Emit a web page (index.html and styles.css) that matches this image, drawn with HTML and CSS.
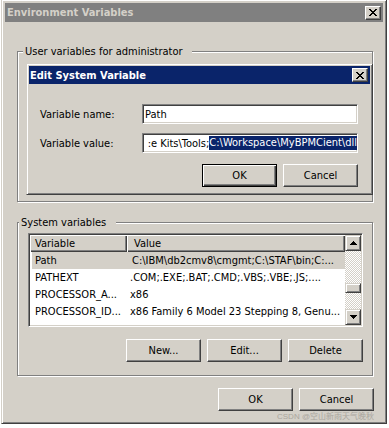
FILE: index.html
```html
<!DOCTYPE html>
<html lang="en">
<head>
<meta charset="UTF-8">
<meta name="viewport" content="width=device-width, initial-scale=1.0">
<title>Environment Variables</title>
<link rel="stylesheet" href="styles.css">
</head>
<body>
<div class="window">
  <div class="titlebar inactive">
    <span class="title-text">Environment Variables</span>
    <span class="close-btn">
      <svg width="8" height="7" viewBox="0 0 8 7" shape-rendering="crispEdges"><path d="M0 0h2v1H0z M6 0h2v1H6z M1 1h2v1H1z M5 1h2v1H5z M2 2h4v1H2z M3 3h2v1H3z M2 4h4v1H2z M1 5h2v1H1z M5 5h2v1H5z M0 6h2v1H0z M6 6h2v1H6z" fill="#000"/></svg>
    </span>
  </div>
  <div class="window-body">
    <div class="groupbox user-group">
      <div class="group-label">User variables for administrator</div>
      <div class="dialog">
        <div class="titlebar active">
          <span class="title-text">Edit System Variable</span>
          <span class="close-btn">
            <svg width="8" height="7" viewBox="0 0 8 7" shape-rendering="crispEdges"><path d="M0 0h2v1H0z M6 0h2v1H6z M1 1h2v1H1z M5 1h2v1H5z M2 2h4v1H2z M3 3h2v1H3z M2 4h4v1H2z M1 5h2v1H1z M5 5h2v1H5z M0 6h2v1H0z M6 6h2v1H6z" fill="#000"/></svg>
          </span>
        </div>
        <div class="dialog-body">
          <div class="field-row">
            <label class="field-label">Variable name:</label>
            <div class="textbox">Path</div>
          </div>
          <div class="field-row">
            <label class="field-label">Variable value:</label>
            <div class="textbox value-box"><span>:e Kits\Tools;</span><span class="selected">C:\Workspace\MyBPMCient\dll</span></div>
          </div>
          <div class="button-row">
            <button class="btn default">OK</button>
            <button class="btn">Cancel</button>
          </div>
        </div>
      </div>
    </div>

    <div class="groupbox system-group">
      <div class="group-label">System variables</div>
      <div class="listview">
        <div class="list-area">
          <div class="list-header">
            <div class="header-cell">Variable</div>
            <div class="header-cell">Value</div>
          </div>
          <div class="list-row selected-row">
            <div class="cell">Path</div>
            <div class="cell">C:\IBM\db2cmv8\cmgmt;C:\STAF\bin;C:...</div>
          </div>
          <div class="list-row">
            <div class="cell">PATHEXT</div>
            <div class="cell">.COM;.EXE;.BAT;.CMD;.VBS;.VBE;.JS;....</div>
          </div>
          <div class="list-row">
            <div class="cell">PROCESSOR_A...</div>
            <div class="cell">x86</div>
          </div>
          <div class="list-row">
            <div class="cell">PROCESSOR_ID...</div>
            <div class="cell">x86 Family 6 Model 23 Stepping 8, Genu...</div>
          </div>
        </div>
        <div class="scrollbar">
          <div class="scroll-btn">
            <svg width="7" height="4" viewBox="0 0 7 4" shape-rendering="crispEdges"><path d="M3 0h1v1H3z M2 1h3v1H2z M1 2h5v1H1z M0 3h7v1H0z" fill="#000"/></svg>
          </div>
          <div class="scroll-track">
            <div class="scroll-thumb"></div>
          </div>
          <div class="scroll-btn">
            <svg width="7" height="4" viewBox="0 0 7 4" shape-rendering="crispEdges"><path d="M0 0h7v1H0z M1 1h5v1H1z M2 2h3v1H2z M3 3h1v1H3z" fill="#000"/></svg>
          </div>
        </div>
      </div>
      <div class="button-row list-buttons">
        <button class="btn">New...</button>
        <button class="btn">Edit...</button>
        <button class="btn">Delete</button>
      </div>
    </div>

    <div class="button-row main-buttons">
      <button class="btn">OK</button>
      <button class="btn">Cancel</button>
    </div>
    <div class="watermark">CSDN @空山新雨天气晚秋</div>
  </div>
</div>
</body>
</html>
```

FILE: styles.css
```css
body {
  margin: 0;
  background: #fff;
  font-family: "DejaVu Sans Condensed", "DejaVu Sans", "Noto Sans CJK SC", sans-serif;
  font-stretch: condensed;
  font-size: 11px;
  color: #000;
}

/* raised 3d window frame */
.window {
  box-sizing: border-box;
  width: 386px;
  height: 425px;
  margin: -1px 0 0 1px;
  padding: 3px;
  background: #d4d0c8;
  border: 1px solid;
  border-color: #d4d0c8 #404040 #404040 #d4d0c8;
  box-shadow: inset 1px 1px #fff, inset -1px -1px #808080;
}
.titlebar {
  display: flex;
  align-items: center;
  justify-content: space-between;
  height: 19px;
  padding: 0 2px;
  font-weight: bold;
  font-size: 11px;
}
.titlebar.inactive {
  background: #808080;
  color: #d4d0c8;
}
.titlebar.active {
  height: 18px;
  padding-left: 1px;
  background: #0a246a;
  color: #fff;
}
.close-btn {
  box-sizing: border-box;
  display: flex;
  align-items: center;
  justify-content: center;
  width: 16px;
  height: 14px;
  background: #d4d0c8;
  border: 1px solid;
  border-color: #fff #404040 #404040 #fff;
  box-shadow: inset -1px -1px #808080;
}

.window-body {
  padding: 29px 0 0 12px;
}

/* etched group boxes */
.groupbox {
  box-sizing: border-box;
  width: 356px;
  border: 1px solid #808080;
  box-shadow: 1px 1px #fff, inset 1px 1px #fff;
}
.user-group {
  height: 151px;
}
.system-group {
  height: 154px;
  margin-top: 20px;
}
.group-label {
  width: fit-content;
  margin-top: -7px;
  line-height: 13px;
  background: #d4d0c8;
}
.user-group .group-label {
  margin-left: 5px;
  padding: 0 9px 0 2px;
}
.system-group .group-label {
  margin-left: 1px;
  padding: 0 10px 0 2px;
}

/* the edit dialog sitting over the main window */
.dialog {
  box-sizing: border-box;
  width: 347px;
  height: 132px;
  margin: 5px 0 0 8px;
  padding: 2px;
  background: #d4d0c8;
  border: 1px solid;
  border-color: #d4d0c8 #404040 #404040 #d4d0c8;
  box-shadow: inset 1px 1px #fff, inset -1px -1px #808080;
}
.dialog-body {
  display: flex;
  flex-direction: column;
  gap: 9px;
  padding: 20px 12px 0 11px;
}
.field-row {
  display: flex;
  align-items: center;
}
.field-label {
  width: 102px;
}
.textbox {
  box-sizing: border-box;
  display: flex;
  align-items: center;
  width: 216px;
  height: 20px;
  padding: 0 2px;
  background: #fff;
  border: 1px solid;
  border-color: #808080 #fff #fff #808080;
  box-shadow: inset 1px 1px #404040, inset -1px -1px #d4d0c8;
  white-space: nowrap;
  overflow: hidden;
}
.value-box {
  justify-content: flex-end;
  padding-right: 0;
}
.selected {
  line-height: 14px;
  background: #0a246a;
  color: #fff;
}

.button-row {
  display: flex;
  justify-content: flex-end;
  gap: 6px;
}
.dialog-body .button-row {
  margin-top: 2px;
}
.btn {
  box-sizing: border-box;
  width: 75px;
  height: 23px;
  padding: 0;
  font: inherit;
  color: #000;
  background: #d4d0c8;
  border: 1px solid;
  border-color: #fff #404040 #404040 #fff;
  box-shadow: inset -1px -1px #808080;
}
.btn.default {
  border-color: #000;
  box-shadow: inset 1px 1px #fff, inset -1px -1px #404040, inset -2px -2px #808080;
}

/* list view */
.listview {
  box-sizing: border-box;
  display: flex;
  width: 335px;
  height: 94px;
  margin: 4px 0 0 10px;
  padding: 1px;
  background: #fff;
  border: 1px solid;
  border-color: #808080 #fff #fff #808080;
  box-shadow: inset 1px 1px #404040, inset -1px -1px #d4d0c8;
}
.list-area {
  flex: 1;
  overflow: hidden;
}
.list-header,
.list-row {
  display: grid;
  grid-template-columns: 97px 1fr;
  height: 17px;
  align-items: center;
  white-space: nowrap;
}
.header-cell {
  display: flex;
  align-items: center;
  height: 17px;
  padding-left: 5px;
  background: #d4d0c8;
  box-shadow: inset 1px 1px #fff, inset -1px -1px #404040, inset -2px -2px #808080;
}
.header-cell + .header-cell {
  padding-left: 7px;
}
.cell {
  padding-left: 5px;
  overflow: hidden;
}
.cell + .cell {
  padding-left: 3px;
}
.selected-row {
  margin-left: 2px;
  background: #d4d0c8;
}
.selected-row .cell:first-child {
  padding-left: 3px;
}

.scrollbar {
  display: flex;
  flex-direction: column;
  width: 16px;
  background: repeating-conic-gradient(#d4d0c8 0 25%, #fff 0 50%) 0 0 / 2px 2px;
}
.scroll-btn,
.scroll-thumb {
  box-sizing: border-box;
  background: #d4d0c8;
  border: 1px solid;
  border-color: #d4d0c8 #404040 #404040 #d4d0c8;
  box-shadow: inset 1px 1px #fff, inset -1px -1px #808080;
}
.scroll-btn {
  display: flex;
  align-items: center;
  justify-content: center;
  height: 16px;
}
.scroll-track {
  flex: 1;
}
.scroll-thumb {
  height: 10px;
  margin-top: 32px;
}

.list-buttons {
  margin: 12px 9px 0 0;
}
.main-buttons {
  margin: 12px 9px 0 0;
}
.watermark {
  margin: 1px 9px 0 0;
  text-align: right;
  font-family: "Liberation Sans", "Noto Sans CJK SC", sans-serif;
  font-size: 8px;
  line-height: 10px;
  color: #aaa69e;
}
```
